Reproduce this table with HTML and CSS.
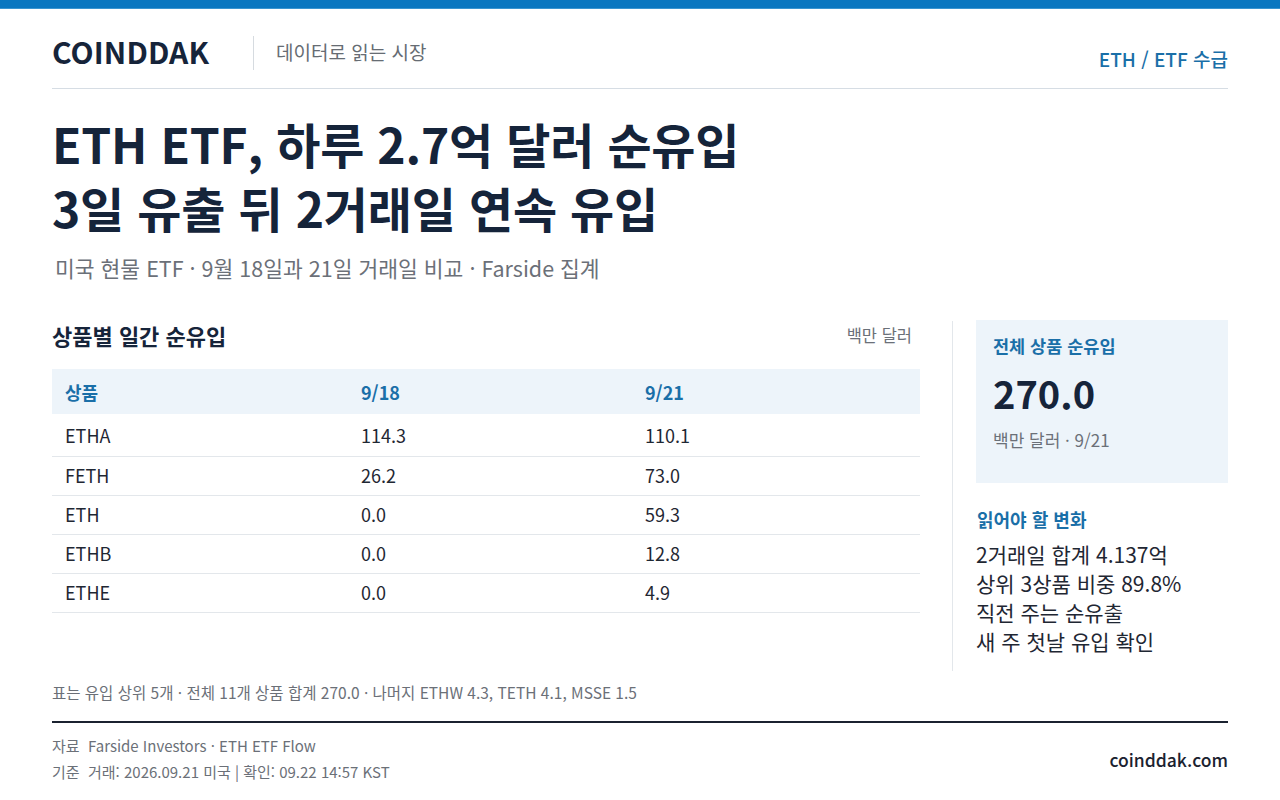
FILE: index.html
```html
<!DOCTYPE html>
<html lang="ko">
<head>
<meta charset="utf-8">
<link rel="stylesheet" href="styles.css">
</head>
<body>
<div class="topbar"></div>
<div class="page">
  <header class="masthead">
    <div class="brand">
      <span class="logo">COINDDAK</span>
      <span class="divider"></span>
      <span class="tagline">데이터로 읽는 시장</span>
    </div>
    <div class="section-tag">ETH / ETF 수급</div>
  </header>

  <h1 class="headline">ETH ETF, 하루 2.7억 달러 순유입<br>3일 유출 뒤 2거래일 연속 유입</h1>
  <p class="dek">미국 현물 ETF · 9월 18일과 21일 거래일 비교 · Farside 집계</p>

  <div class="content">
    <section class="table-col">
      <div class="table-head">
        <h2 class="table-title">상품별 일간 순유입</h2>
        <span class="unit">백만 달러</span>
      </div>
      <table class="flows">
        <thead>
          <tr><th>상품</th><th>9/18</th><th>9/21</th></tr>
        </thead>
        <tbody>
          <tr><td>ETHA</td><td>114.3</td><td>110.1</td></tr>
          <tr><td>FETH</td><td>26.2</td><td>73.0</td></tr>
          <tr><td>ETH</td><td>0.0</td><td>59.3</td></tr>
          <tr><td>ETHB</td><td>0.0</td><td>12.8</td></tr>
          <tr><td>ETHE</td><td>0.0</td><td>4.9</td></tr>
        </tbody>
      </table>
    </section>
    <aside class="side">
      <div class="stat-box">
        <div class="stat-label">전체 상품 순유입</div>
        <div class="stat-value">270.0</div>
        <div class="stat-sub">백만 달러 · 9/21</div>
      </div>
      <div class="notes-title">읽어야 할 변화</div>
      <ul class="notes">
        <li>2거래일 합계 4.137억</li>
        <li>상위 3상품 비중 89.8%</li>
        <li>직전 주는 순유출</li>
        <li>새 주 첫날 유입 확인</li>
      </ul>
    </aside>
  </div>

  <p class="footnote">표는 유입 상위 5개 · 전체 11개 상품 합계 270.0 · 나머지 ETHW 4.3, TETH 4.1, MSSE 1.5</p>

  <footer class="footer">
    <div class="sources">
      <div>자료&nbsp; Farside Investors · ETH ETF Flow</div>
      <div>기준&nbsp; 거래: 2026.09.21 미국 | 확인: 09.22 14:57 KST</div>
    </div>
    <div class="site">coinddak.com</div>
  </footer>
</div>
</body>
</html>
```

FILE: styles.css
```css
* { box-sizing: border-box; }
html, body { margin: 0; padding: 0; background: #fff; }
body {
  font-family: "Noto Sans CJK KR", "Noto Sans", sans-serif;
  color: #15243a;
  width: 1280px;
  height: 800px;
  overflow: hidden;
}
.topbar { height: 9px; background: #0a77c0; border-bottom: 1px solid #3a95d0; }
.page { padding: 0 52px; }

.masthead {
  display: flex;
  justify-content: space-between;
  align-items: flex-end;
  height: 80px;
  border-bottom: 1px solid #d6dde4;
  padding-bottom: 16px;
}
.brand { display: flex; align-items: center; align-self: center; margin-top: 20px; }
.logo { font-size: 30px; font-weight: 700; letter-spacing: 0.1px; color: #16243a; line-height: 1; }
.divider { width: 1px; height: 34px; background: #d6dbe0; margin: 4px 22px 0 44px; }
.tagline { font-size: 19px; color: #666c73; line-height: 1; margin-top: 2px; }
.section-tag { font-size: 19px; font-weight: 500; color: #1a6fa8; line-height: 1; margin-bottom: 4px; }

.headline {
  margin: 22px 0 0;
  font-size: 48px;
  font-weight: 700;
  line-height: 64px;
  color: #15243a;
  letter-spacing: -0.2px;
}
.dek { margin: 15px 0 0 3px; font-size: 21.5px; color: #6b7078; line-height: 28px; }

.content { display: flex; margin-top: 37px; }
.table-col { width: 868px; }
.table-head { display: flex; justify-content: space-between; align-items: center; padding-right: 8px; height: 32px; }
.table-title { margin: 0; font-size: 22px; font-weight: 700; color: #16243a; }
.unit { font-size: 16.5px; color: #6b7078; }

.flows { width: 100%; border-collapse: collapse; margin-top: 18px; font-size: 18px; }
.flows th {
  text-align: left; font-weight: 700; color: #1a6fa8; background: #edf4fa;
  height: 45px; padding: 0 13px; font-size: 18px;
}
.flows th:nth-child(1), .flows td:nth-child(1) { width: 296px; }
.flows th:nth-child(2), .flows td:nth-child(2) { width: 284px; }
.flows td { padding: 8px 13px 10px; line-height: 20px; color: #1f2733; border-bottom: 1px solid #e3e7eb; }
.flows tbody tr:first-child td { padding-top: 11px; padding-bottom: 11px; }

.side {
  margin-left: 32px;
  border-left: 1px solid #e3e7eb;
  padding-left: 23px;
  width: 276px;
  margin-top: 2px;
  height: 350px;
}
.stat-box { background: #edf4fa; padding: 14px 17px 22px; height: 163px; margin-top: -1px; }
.stat-label { font-size: 17.5px; font-weight: 700; color: #1a6fa8; line-height: 24px; }
.stat-value { font-size: 38px; font-weight: 700; color: #16243a; line-height: 50px; margin-top: 10px; }
.stat-sub { font-size: 17px; color: #6b7078; line-height: 24px; margin-top: 10px; }
.notes-title { font-size: 18px; font-weight: 700; color: #1a6fa8; margin-top: 24px; line-height: 24px; padding-left: 1px; }
.notes { list-style: none; margin: 9px 0 0; padding: 0; font-size: 21px; line-height: 29px; color: #1f2733; }

.footnote { margin: 9px 0 0; font-size: 15.5px; color: #6b7078; line-height: 24px; }
.footer {
  margin-top: 17px;
  border-top: 2px solid #1b2230;
  display: flex;
  justify-content: space-between;
  align-items: center;
  padding-top: 10px;
}
.sources { font-size: 15px; color: #6b7078; line-height: 26px; }
.site { font-size: 17.5px; font-weight: 500; color: #1b2230; }
```
